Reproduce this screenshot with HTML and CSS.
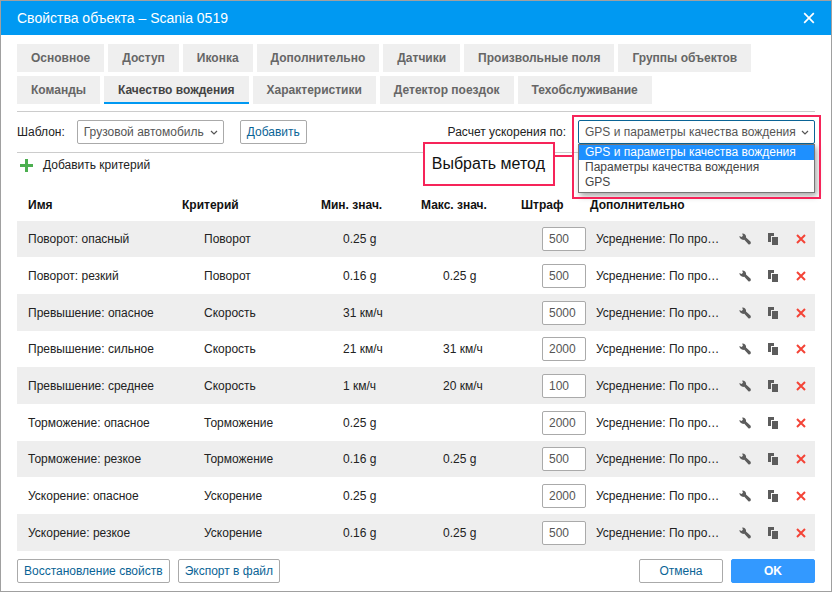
FILE: index.html
```html
<!DOCTYPE html>
<html lang="ru">
<head>
<meta charset="utf-8">
<title>Свойства объекта – Scania 0519</title>
<link rel="stylesheet" href="styles.css">
</head>
<body>
<svg class="sprite" aria-hidden="true">
  <symbol id="wrench" viewBox="0 0 12 12"><path d="M.3 3 L2.600 3.900 L3.900 2.700 L3.200 .5 C5.500 .2 7.500 2 7 4.400 L11.400 8.600 C12.600 10.300 11 12 9.400 11.200 L5.300 6.800 C2.800 7.300 .5 5.500 .3 3Z"/></symbol>
  <symbol id="copy" viewBox="0 0 12 12"><path d="M1 0h6v3H4v6H1z"/><path d="M5 4h6v8H5z"/></symbol>
  <symbol id="cross" viewBox="0 0 10 10"><path d="M1 1l8 8M9 1l-8 8"/></symbol>
  <symbol id="chevron" viewBox="0 0 8 6"><path d="M1 1l3 3 3-3"/></symbol>
</svg>
<div class="dialog">
  <header class="title-bar">
    <h1>Свойства объекта – Scania 0519</h1>
    <button class="close" type="button" aria-label="Закрыть"><svg><use href="#cross"/></svg></button>
  </header>
  <main class="content">
    <nav class="tabs">
      <button type="button">Основное</button>
      <button type="button">Доступ</button>
      <button type="button">Иконка</button>
      <button type="button">Дополнительно</button>
      <button type="button">Датчики</button>
      <button type="button">Произвольные поля</button>
      <button type="button">Группы объектов</button>
      <button type="button">Команды</button>
      <button type="button" class="active">Качество вождения</button>
      <button type="button">Характеристики</button>
      <button type="button">Детектор поездок</button>
      <button type="button">Техобслуживание</button>
    </nav>
    <div class="toolbar">
      <label for="template">Шаблон:</label>
      <div class="select template">
        <select id="template"><option>Грузовой автомобиль</option></select>
        <svg><use href="#chevron"/></svg>
      </div>
      <button class="button" type="button">Добавить</button>
      <label class="method-label" for="method">Расчет ускорения по:</label>
      <div class="select method">
        <select id="method"><option>GPS и параметры качества вождения</option><option>Параметры качества вождения</option><option>GPS</option></select>
        <svg><use href="#chevron"/></svg>
        <ul class="options">
          <li class="selected">GPS и параметры качества вождения</li>
          <li>Параметры качества вождения</li>
          <li>GPS</li>
        </ul>
        <div class="highlight"></div>
        <div class="callout">Выбрать метод</div>
      </div>
    </div>
    <button class="add" type="button"><svg viewBox="0 0 13 13"><path d="M5 0h3v5h5v3H8v5H5V8H0V5h5z"/></svg>Добавить критерий</button>
    <table>
      <colgroup><col><col class="c-criterion"><col class="c-value"><col class="c-value"><col class="c-penalty"><col class="c-extra"><col class="c-actions"></colgroup>
      <thead><tr><th>Имя</th><th>Критерий</th><th>Мин. знач.</th><th>Макс. знач.</th><th>Штраф</th><th>Дополнительно</th><th></th></tr></thead>
      <tbody id="rows"></tbody>
    </table>
    <footer>
      <button class="button" type="button">Восстановление свойств</button>
      <button class="button" type="button">Экспорт в файл</button>
      <button class="button cancel" type="button">Отмена</button>
      <button class="button ok" type="button">OK</button>
    </footer>
  </main>
</div>
<script src="rows.js"></script>
</body>
</html>
```
FILE: styles.css
```css
* { box-sizing: border-box; }
body { margin: 0; font: 12px/16px "Liberation Sans", Arial, sans-serif; color: #222; background: #fff; }
button, input, select { font: inherit; margin: 0; }
button { border: 0; background: none; padding: 0; }
.sprite { position: absolute; width: 0; height: 0; }
.dialog { min-height: 100vh; border: 1px solid #a0a0a0; }

.title-bar { display: flex; align-items: center; justify-content: space-between; height: 34px; padding: 0 16px; background: #0099f2; color: #fff; }
h1 { margin: 0; font-size: 14px; font-weight: 400; }
.close { display: flex; }
.close svg { width: 12px; height: 12px; stroke: #fff; stroke-width: 1.4; }

.content { padding: 9px 16px 8px; }
.tabs { display: flex; flex-wrap: wrap; gap: 4px; padding-bottom: 7px; border-bottom: 1px solid #ccc; }
.tabs button { height: 28px; padding: 0 14px; background: #efefef; color: #666; font-weight: 700; white-space: nowrap; }
.tabs .active { color: #444; box-shadow: inset 0 -2px #0099f2; }

.toolbar { display: flex; align-items: center; padding: 8px 0; border-bottom: 1px solid #ccc; white-space: nowrap; }
.select { position: relative; }
.select select { display: block; width: 100%; height: 24px; padding: 0 6px; border: 1px solid #aaa; border-radius: 2px; background: #fff; color: #555; appearance: none; }
.select > svg { position: absolute; right: 6px; top: 10px; width: 8px; height: 6px; fill: none; stroke: #555; stroke-width: 1.2; pointer-events: none; }
.template { width: 147px; margin: 0 16px 0 12px; }
.method-label { margin-left: auto; }
.method { width: 237px; margin-left: 12px; }
.method select { border-color: #0a6496; }
.options { position: absolute; z-index: 2; top: 24px; left: 0; right: 0; margin: 0; padding: 0 0 2px; list-style: none; border: 1px solid #767676; background: #fff; color: #444; line-height: 15px; box-shadow: 2px 3px 6px rgba(0, 0, 0, .35); }
.options li { padding: 0 6px; }
.options .selected { background: #1e90ff; color: #fff; }
.highlight { position: absolute; z-index: 3; top: -5px; left: -6px; right: -6px; height: 84px; border: 2px solid #f62459; pointer-events: none; }
.callout { position: absolute; z-index: 3; top: 22px; right: 260px; padding: 11px 8px 11px 7px; border: 2px solid #f62459; background: #fff; color: #111; font-size: 16px; line-height: 18px; }
.callout::after { content: ""; position: absolute; left: 100%; top: 11px; width: 20px; height: 2px; background: #f62459; }

.button { height: 24px; padding: 0 6px; border: 1px solid #aaa; border-radius: 2px; background: #fff; color: #0a6496; white-space: nowrap; }
.add { display: flex; align-items: center; gap: 10px; height: 24px; padding-left: 3px; color: #222; }
.add svg { width: 13px; height: 13px; fill: #4caf50; }

table { width: 100%; margin-top: 11px; border-collapse: collapse; table-layout: fixed; }
.c-criterion { width: 139px; }
.c-value { width: 100px; }
.c-penalty { width: 69px; }
.c-extra { width: 141px; }
.c-actions { width: 84px; }
th { height: 33px; padding: 0; text-align: left; color: #111; }
th:first-child, td:first-child { padding-left: 11px; }
td { height: 37px; padding: 0 0 0 22px; white-space: nowrap; }
tr:nth-child(3n+1) td { height: 36px; }
tbody tr:nth-child(odd) { background: #eee; }
td.penalty { padding-left: 21px; }
td input { display: block; width: 44px; height: 24px; padding: 0 6px; border: 1px solid #aaa; border-radius: 2px; background: #fff; color: #555; }
td.extra { padding: 0 6px; overflow: hidden; text-overflow: ellipsis; }
td.actions { padding: 0; }
.actions div { display: grid; grid-template-columns: repeat(3, 1fr); }
.actions button { display: flex; justify-content: center; align-items: center; height: 24px; }
.actions svg { width: 12px; height: 12px; fill: #5c5c5c; }
.actions .delete svg { width: 10px; height: 10px; stroke: #f44336; stroke-width: 2; }

footer { display: flex; gap: 8px; padding-top: 8px; }
.cancel, .ok { width: 84px; }
.cancel { margin-left: auto; }
.ok { border-color: #3399ff; background: #3399ff; color: #fff; font-weight: 700; }
```
FILE: rows.js
```js
const criteria = [
  ["Поворот: опасный", "Поворот", "0.25 g", "", 500],
  ["Поворот: резкий", "Поворот", "0.16 g", "0.25 g", 500],
  ["Превышение: опасное", "Скорость", "31 км/ч", "", 5000],
  ["Превышение: сильное", "Скорость", "21 км/ч", "31 км/ч", 2000],
  ["Превышение: среднее", "Скорость", "1 км/ч", "20 км/ч", 100],
  ["Торможение: опасное", "Торможение", "0.25 g", "", 2000],
  ["Торможение: резкое", "Торможение", "0.16 g", "0.25 g", 500],
  ["Ускорение: опасное", "Ускорение", "0.25 g", "", 2000],
  ["Ускорение: резкое", "Ускорение", "0.16 g", "0.25 g", 500]
];

document.getElementById("rows").innerHTML = criteria.map(([name, type, min, max, penalty]) => `
  <tr>
    <td>${name}</td><td>${type}</td><td>${min}</td><td>${max}</td>
    <td class="penalty"><input type="text" value="${penalty}" aria-label="Штраф"></td>
    <td class="extra">Усреднение: По про…</td>
    <td class="actions"><div>
      <button type="button" aria-label="Изменить"><svg><use href="#wrench"/></svg></button>
      <button type="button" aria-label="Копировать"><svg><use href="#copy"/></svg></button>
      <button type="button" class="delete" aria-label="Удалить"><svg><use href="#cross"/></svg></button>
    </div></td>
  </tr>`).join("");
```
